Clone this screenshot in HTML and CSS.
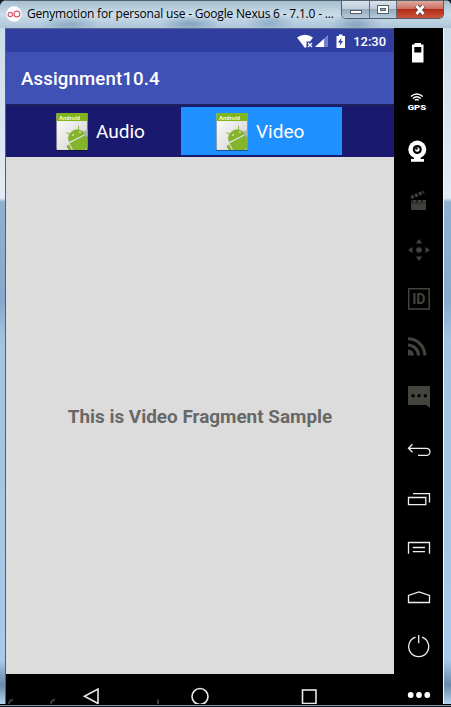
FILE: index.html
```html
<!DOCTYPE html>
<html lang="en">
<head>
<meta charset="utf-8">
<title>Genymotion</title>
<link rel="stylesheet" href="styles.css">
</head>
<body>
<svg width="0" height="0" class="defs">
  <defs>
    <linearGradient id="page" x1="0" y1="0" x2="1" y2="1"><stop offset="0" stop-color="#fff"/><stop offset="1" stop-color="#cfcfcf"/></linearGradient>
    <clipPath id="pageClip"><rect x="0.5" y="0" width="31" height="37"/></clipPath>
    <symbol id="droid" viewBox="0 0 32 38">
      <rect x="0" y="1" width="32" height="37" rx="1" fill="#000" opacity=".4"/>
      <rect x="0.5" y="0" width="31" height="37" rx="1" fill="url(#page)"/>
      <path d="M.5 1q0-1 1-1h29q1 0 1 1v7H.5z" fill="#80b51d"/>
      <g clip-path="url(#pageClip)">
        <circle cx="31" cy="20" r="3" fill="#aeb4b4"/>
        <g fill="#83b42c" transform="translate(21 25) rotate(-27)">
          <path d="M-9 0a9 8.500 0 0 1 18 0z"/>
          <path d="M-9 1.300H9V14H-9z"/>
          <rect x="-13" y="2" width="3" height="9" rx="1.500"/>
          <path d="M-5-7l-2-3M5-7l2-3" stroke="#83b42c" stroke-width=".9"/>
        </g>
        <circle cx="17" cy="22" r=".8" fill="#fff"/><circle cx="24" cy="19" r=".8" fill="#fff"/>
      </g>
    </symbol>
  </defs>
</svg>
<div class="window">
  <header class="titlebar">
    <svg class="logo" width="16" height="16" viewBox="0 0 16 16"><circle cx="8" cy="8" r="7.700" fill="#fff"/><g fill="none" stroke="#d8576f" stroke-width="1.200"><circle cx="4.300" cy="8.500" r="2.200"/><circle cx="10.900" cy="8" r="2.900"/></g></svg>
    <span class="title">Genymotion for personal use - Google Nexus 6 - 7.1.0 - ...</span>
    <div class="controls">
      <span class="ctl min"><svg width="14" height="12" viewBox="0 0 14 12"><rect x="1.500" y="6.500" width="11" height="3" fill="#fff" stroke="#555d68"/></svg></span>
      <span class="ctl max"><svg width="14" height="12" viewBox="0 0 14 12"><rect x="1.500" y="1.500" width="11" height="8" fill="#fff" stroke="#555d68"/><rect x="4.500" y="4.500" width="5" height="2" fill="#a9b6c6" stroke="#555d68"/></svg></span>
      <span class="ctl close"><svg width="14" height="12" viewBox="0 0 14 12"><path d="M3.500 2l7 8M10.500 2l-7 8" stroke="#594246" stroke-width="4.600"/><path d="M3.500 2l7 8M10.500 2l-7 8" stroke="#fff" stroke-width="2.700"/></svg></span>
    </div>
  </header>
  <div class="body">
    <main class="phone">
      <div class="status">
        <svg width="52" height="16" viewBox="0 0 52 16">
          <path d="M0 3.500Q8-2 16 3.500L13 7.500H9.500V13L8 14z" fill="#fff"/><path d="M11 9l4 4M15 9l-4 4" stroke="#fff" stroke-width="1.200"/>
          <path d="M31 1v12H18z" fill="#7481ca"/><path d="M27 4.700V13h-9z" fill="#fff"/>
          <path d="M39.500 2h2.500V.5h3.500V2H48v12h-8.500z" fill="#fff"/><path d="M44.500 3.500l-3.500 5h2.200l-.7 3.500 3.500-5h-2.200z" fill="#303f9f"/>
        </svg>
        <span class="clock">12:30</span>
      </div>
      <div class="appbar">Assignment10.4</div>
      <nav class="tabs">
        <div class="tab"><svg width="32" height="38"><use href="#droid"/></svg><span>Audio</span><b class="tag">Android</b></div>
        <div class="tab active"><svg width="32" height="38"><use href="#droid"/></svg><span>Video</span><b class="tag">Android</b></div>
      </nav>
      <section class="content">This is Video Fragment Sample</section>
      <div class="navbar">
        <svg width="388" height="30" viewBox="0 0 388 30" fill="none" stroke="#e8e8e8" stroke-width="1.600">
          <path d="M92 15v14.500L78.500 22.300z"/><circle cx="194" cy="22.500" r="8"/><rect x="296.500" y="16" width="13.500" height="13.500"/>
          <path d="M3 30q0-4 4-4M45 30q0-4 4-4M152 25.500V30" stroke="#3c3c3c" stroke-width="2"/>
        </svg>
      </div>
    </main>
    <aside class="tools">
      <svg viewBox="0 0 49 49"><path fill="#fff" fill-rule="evenodd" d="M18 16.500h2.500V15h6.500v1.500h2.500v18H18zM20.300 19v5.500h7V19z"/></svg>
      <svg viewBox="0 0 49 49"><g fill="none" stroke="#fff" stroke-width="1.400"><path d="M16.800 19.500q6-5 12 0M18.800 21.500q4-3.500 8 0M20.800 23.300q2-1.600 4 0"/></g><text x="13.700" y="32.500" textLength="18.500" lengthAdjust="spacingAndGlyphs" class="gps">GPS</text></svg>
      <svg viewBox="0 0 49 49"><circle cx="23.300" cy="23.500" r="9" fill="#fff"/><circle cx="23.300" cy="23.500" r="4.500" fill="#000"/><circle cx="23.300" cy="23.500" r="2.300" fill="#fff"/><circle cx="22.500" cy="22.500" r="1.200" fill="#000"/><path d="M20 31h6.500v2H30v2.700H17V33h3z" fill="#fff"/></svg>
      <svg viewBox="0 0 49 49"><path d="M17 25h15v10H17z" fill="#40403c"/><path d="M17 22.500L30 17" stroke="#40403c" stroke-width="3.500" stroke-dasharray="3 1.300"/><path d="M19 24.500l-2 3M24 24.500l-2 3M29 24.500l-2 3" stroke="#000" stroke-width="1"/><path d="M17 28h15" stroke="#20201e" stroke-width=".7"/></svg>
      <svg viewBox="0 0 49 49"><g fill="#44443f"><circle cx="25" cy="26" r="2.800"/><path d="M25 15l3 4.500h-6zM25 37l3-4.500h-6zM14 26l4.500-3v6zM36 26l-4.500-3v6z"/></g></svg>
      <svg viewBox="0 0 49 49"><rect x="14.700" y="15.700" width="20.500" height="20.300" fill="none" stroke="#44443f" stroke-width="1.500"/><text x="18.200" y="31" textLength="13.300" lengthAdjust="spacingAndGlyphs" class="id">ID</text></svg>
      <svg viewBox="0 0 49 49"><path d="M14 27.500a6 6 0 0 1 6 6h-6z" fill="#44443f"/><path d="M14 23a10.500 10.500 0 0 1 10.500 10.500M14 16.700a16.800 16.800 0 0 1 16.800 16.800" fill="none" stroke="#44443f" stroke-width="3"/></svg>
      <svg viewBox="0 0 49 49"><path d="M14 15h22v22l-4-3H14z" fill="#44443f"/><g fill="#000"><circle cx="19" cy="24.800" r="1.700"/><circle cx="25" cy="24.800" r="1.700"/><circle cx="31.300" cy="24.800" r="1.700"/></g></svg>
      <svg viewBox="0 0 49 49" class="line"><path d="M18.500 24.300l-4 4 4 4M14.500 28.300H32.500a3.500 3.500 0 0 1 0 7H24"/></svg>
      <svg viewBox="0 0 49 49" class="line"><path d="M14.500 28.500h17.300v7.200H14.500zM19 24.700h16.500V33.500"/></svg>
      <svg viewBox="0 0 49 49" class="line"><path d="M14.500 35.700V24.500h21v11.200M18.700 29.500H31M18.700 33.700H31"/></svg>
      <svg viewBox="0 0 49 49" class="line"><path d="M14.500 35.500V28.500L25 25l10.500 3.500v7z"/></svg>
      <svg viewBox="0 0 49 49" class="line"><path d="M21.500 21.200a10 10 0 1 0 6.400 0M24.700 19v8.300"/></svg>
      <svg viewBox="0 0 49 49"><g fill="#fff"><circle cx="16.700" cy="30" r="2.900"/><circle cx="25" cy="30" r="2.900"/><circle cx="33.300" cy="30" r="2.900"/></g></svg>
    </aside>
  </div>
  <footer class="edge"></footer>
</div>
</body>
</html>
```
FILE: styles.css
```css
* { box-sizing: border-box; }
body { margin: 0; background: #0c1c28; font-family: Roboto, "Liberation Sans", sans-serif; }
.defs { display: block; }
.window {
  width: 451px; height: 707px; overflow: hidden;
  display: flex; flex-direction: column;
  border-radius: 7px 6px 0 0;
  background: linear-gradient(180deg, #c5d9e8 0, #d5e3ee 100px, #e1ebf5 198px, #8fb0d0 202px, #86aacb 300px, #a3c3e2 340px, #a9c9ea 660px, #6889a9 685px, #b8d6f5 705px);
}
.titlebar {
  height: 28px; flex: none; display: flex; align-items: flex-start; padding-left: 6px;
  border-top: 1px solid #53636c;
  background:
    radial-gradient(ellipse 30px 8px at 190px 23px, #82a2bd, transparent),
    radial-gradient(ellipse 30px 9px at 70px 24px, #8eabc3, transparent),
    radial-gradient(ellipse 25px 9px at 270px 22px, #8facc6, transparent),
    radial-gradient(ellipse 25px 12px at 355px 24px, #87a4c0, transparent),
    linear-gradient(180deg, #a6bfd0, #cadbe8 50%, #adc5da);
}
.logo { margin-top: 5px; }
.title { margin-left: 5px; margin-top: 4px; width: 314px; flex: none; font: 12px/18px "Open Sans", "Noto Sans", sans-serif; letter-spacing: -0.19px; color: #000; white-space: nowrap; }
.controls { display: flex; height: 18px; border: 1px solid #4f5b68; border-top: 0; border-radius: 0 0 5px 5px; overflow: hidden; width: 103px; }
.ctl { display: flex; align-items: center; justify-content: center; height: 17px; background: linear-gradient(#d9e3ec, #bdcbd9 48%, #94a7bb 50%, #b7cbde); border-right: 1px solid #5f6d7c; }
.min { width: 28px; }
.max { width: 27px; }
.close { flex: 1; border: 0; background: linear-gradient(#dfa99f, #cd7263 45%, #b42c17 50%, #cd543c); }
.body { flex: 1; min-height: 0; display: flex; margin: 0 7px 0 5px; border-left: 1px solid #53616e; overflow: hidden; border-right: 1px solid #eef6ff; }
.phone { width: 388px; flex: none; display: flex; flex-direction: column; }
.status { height: 24px; flex: none; background: #303f9f; display: flex; justify-content: flex-end; align-items: center; gap: 3px; padding: 2px 8px 0 0; border-top: 1px solid #5b6690; color: #fff; }
.clock { font: 500 12.9px/16px Roboto, sans-serif; width: 34px; text-align: right; white-space: nowrap; }
.appbar { height: 52px; flex: none; background: #3f51b5; color: #fff; font: 500 18.6px/54px Roboto, sans-serif; padding-left: 15px; letter-spacing: .15px; }
.tabs { height: 53px; flex: none; background: #191970; display: flex; padding: 3px 0 2px 15px; box-shadow: inset 0 2px 2px #202461; }
.tab { position: relative; width: 160px; height: 48px; display: flex; align-items: center; padding: 1px 0 0 35px; gap: 8px; color: #fff; font-size: 19px; }
.tab.active { width: 161px; background: #1e90ff; }
.tag { position: absolute; left: 38px; top: 7px; height: 6px; overflow: hidden; font: bold 6px/7px Roboto, sans-serif; color: #eef8d8; }
.content { flex: 1; background: #dcdcdc; color: #686868; display: flex; align-items: center; justify-content: center; padding-top: 2px; font-weight: bold; font-size: 18.9px; white-space: nowrap; }
.navbar { height: 30px; flex: none; background: #000; }
.navbar svg { display: block; }
.tools { width: 49px; flex: none; background: #000; display: flex; flex-direction: column; overflow: hidden; }
.tools svg { width: 49px; height: 49px; flex: none; display: block; }
.gps { font: 900 7.600px Roboto, sans-serif; fill: #fff; }
.id { font: bold 14px Roboto, sans-serif; fill: #44443f; }
.line { fill: none; stroke: #eee; stroke-width: 1.300px; }
.edge { height: 3px; flex: none; background: linear-gradient(#000 0 1px, #81919b 1px 2px, #0d222e 2px); }
```
